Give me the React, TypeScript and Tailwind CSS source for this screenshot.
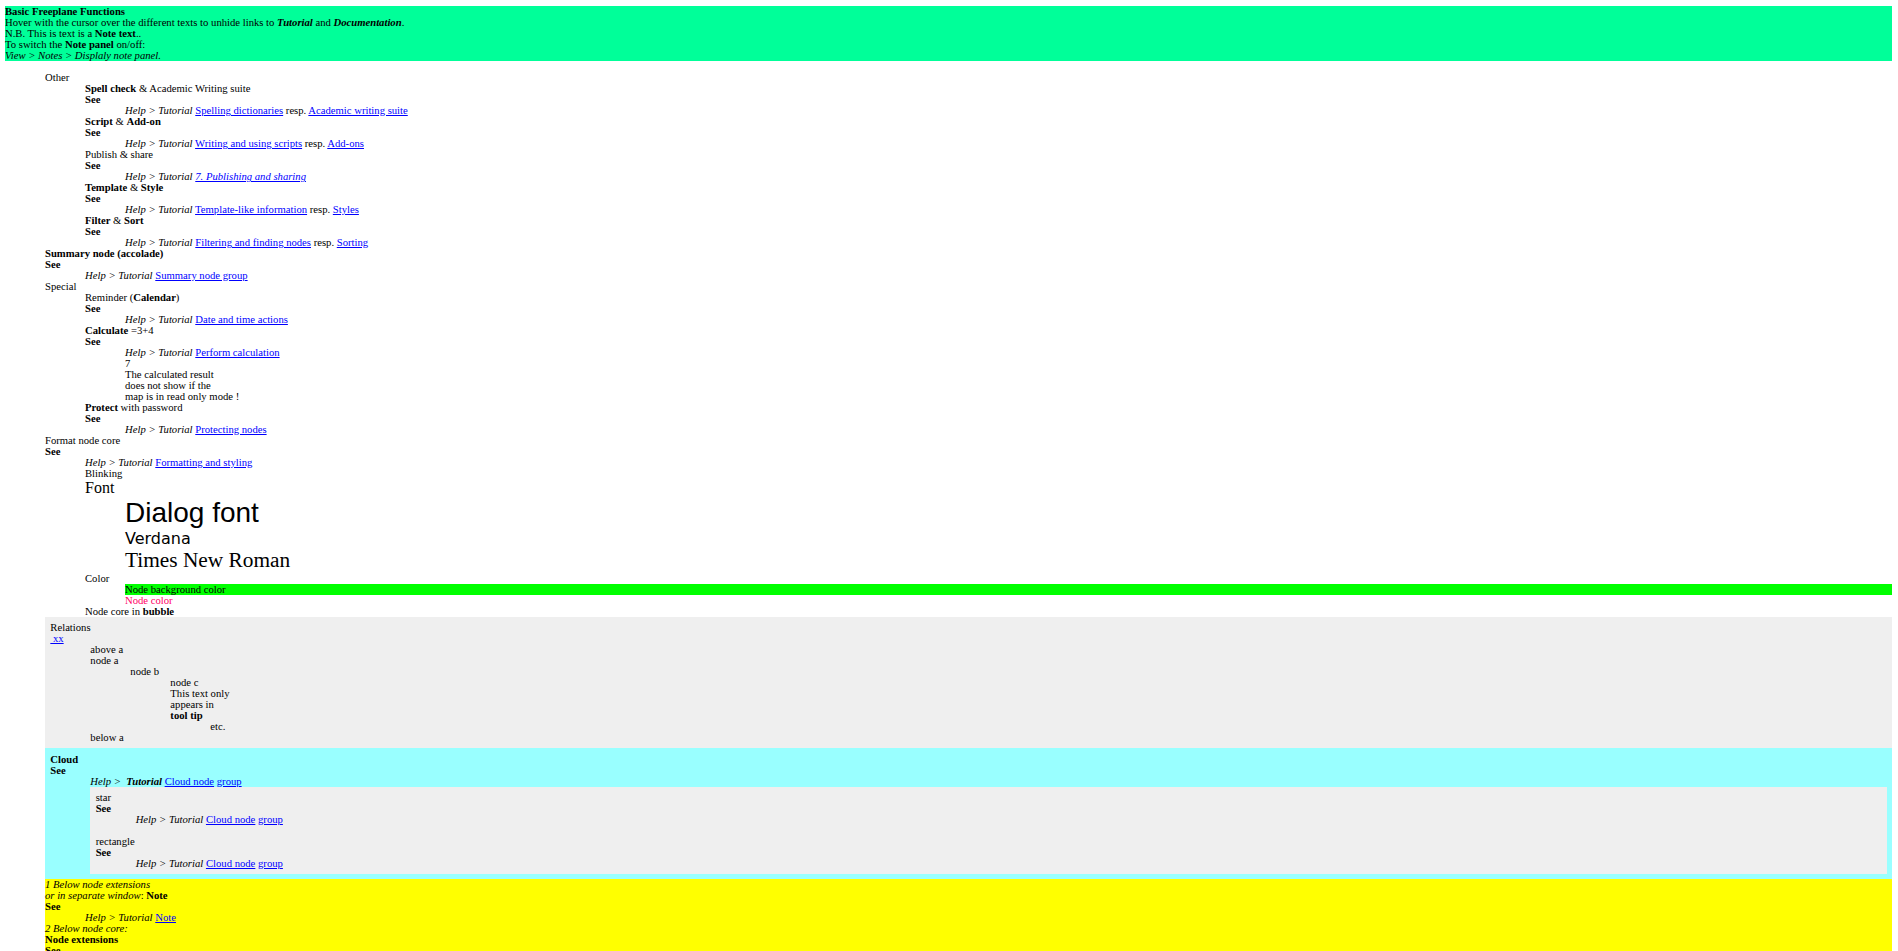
const link = 'text-[#0000ff] underline'

function Help({ children }: { children: React.ReactNode }) {
  return (
    <div className="pl-10">
      <i>Help &gt; Tutorial</i> {children}
    </div>
  )
}

function See({ children }: { children: React.ReactNode }) {
  return (
    <>
      <div className="font-bold">See</div>
      {children}
    </>
  )
}

function A({ children, italic = false }: { children: React.ReactNode; italic?: boolean }) {
  return <a href="#" className={italic ? `${link} italic` : link}>{children}</a>
}

function Section({ title, children }: { title: React.ReactNode; children: React.ReactNode }) {
  return (
    <>
      <div>{title}</div>
      <See>
        <Help>{children}</Help>
      </See>
    </>
  )
}

export default function App() {
  return (
    <div className="h-[951px] overflow-hidden bg-white pl-[5px] pr-[6px] pt-[6px] font-['Liberation_Serif',serif] text-[10.67px] leading-[11px] text-black">
      {/* Note text */}
      <div className="bg-[#00ff99]">
        <div className="font-bold">Basic Freeplane Functions</div>
        <div>
          Hover with the cursor over the different texts to unhide links to <b><i>Tutorial</i></b> and <b><i>Documentation</i></b>.
        </div>
        <div>N.B. This is text is a <b>Note text</b>..</div>
        <div>To switch the <b>Note panel</b> on/off:</div>
        <div><i>View &gt; Notes &gt; Displaly note panel.</i></div>
      </div>

      <div className="mt-[11px] pl-10">
        <div>Other</div>
        <div className="pl-10">
          <Section title={<><b>Spell check</b> &amp; Academic Writing suite</>}>
            <A>Spelling dictionaries</A> resp. <A>Academic writing suite</A>
          </Section>
          <Section title={<><b>Script</b> &amp; <b>Add-on</b></>}>
            <A>Writing and using scripts</A> resp. <A>Add-ons</A>
          </Section>
          <Section title="Publish &amp; share">
            <A italic>7. Publishing and sharing</A>
          </Section>
          <Section title={<><b>Template</b> &amp; <b>Style</b></>}>
            <A>Template-like information</A> resp. <A>Styles</A>
          </Section>
          <Section title={<><b>Filter</b> &amp; <b>Sort</b></>}>
            <A>Filtering and finding nodes</A> resp. <A>Sorting</A>
          </Section>
        </div>

        <Section title={<b>Summary node (accolade)</b>}>
          <A>Summary node group</A>
        </Section>

        <div>Special</div>
        <div className="pl-10">
          <Section title={<>Reminder (<b>Calendar</b>)</>}>
            <A>Date and time actions</A>
          </Section>
          <Section title={<><b>Calculate</b> =3+4</>}>
            <A>Perform calculation</A>
          </Section>
          <div className="pl-10">
            <div>7</div>
            <div>The calculated result</div>
            <div>does not show if the</div>
            <div>map is in read only mode !</div>
          </div>
          <Section title={<><b>Protect</b> with password</>}>
            <A>Protecting nodes</A>
          </Section>
        </div>

        <Section title="Format node core">
          <A>Formatting and styling</A>
        </Section>
        <div className="pl-10">
          <div>Blinking</div>
          <div className="text-[16px] leading-[18px]">Font</div>
          <div className="pl-10">
            <div className="font-['Liberation_Sans',sans-serif] text-[28px] leading-[32px]">Dialog font</div>
            <div className="font-['DejaVu_Sans',sans-serif] text-[16px] leading-[19px]">Verdana</div>
            <div className="text-[21.33px] leading-[25px]">Times New Roman</div>
          </div>
          <div>Color</div>
          <div className="pl-10">
            <div className="bg-[#00ff00]">Node background color</div>
            <div className="text-[#ff0066]">Node color</div>
          </div>
          <div>Node core in <b>bubble</b></div>
        </div>

        {/* Clouds */}
        <div className="bg-[#efefef] px-[5.33px] py-[5px]">
          <div>Relations</div>
          <a href="#" className={link}>&nbsp;xx</a>
          <div className="pl-10">
            <div>above a</div>
            <div>node a</div>
            <div className="pl-10">
              <div>node b</div>
              <div className="pl-10">
                <div>node c</div>
                <div>This text only</div>
                <div>appears in</div>
                <div className="font-bold">tool tip</div>
                <div className="pl-10">etc.</div>
              </div>
            </div>
            <div>below a</div>
          </div>
        </div>

        <div className="bg-[#99ffff] px-[5.33px] pb-[5px] pt-[6px]">
          <div className="font-bold">Cloud</div>
          <See>
            <div className="pl-10">
              <i>Help &gt;&nbsp; <b>Tutorial</b></i> <A>Cloud node</A> <A>group</A>
            </div>
          </See>
          <div className="ml-10 bg-[#efefef] px-[5.33px] py-[5px]">
            <div>star</div>
            <See>
              <div className="pl-10">
                <i>Help &gt; Tutorial</i> <A>Cloud node</A> <A>group</A>
              </div>
            </See>
            <div className="h-[11px]" />
            <div>rectangle</div>
            <See>
              <div className="pl-10">
                <i>Help &gt; Tutorial</i> <A>Cloud node</A> <A>group</A>
              </div>
            </See>
          </div>
        </div>

        <div className="bg-[#ffff00]">
          <div><i>1 Below node extensions</i></div>
          <div><i>or in separate window</i>: <b>Note</b></div>
          <See>
            <Help><A>Note</A></Help>
          </See>
          <div><i>2 Below node core:</i></div>
          <div className="font-bold">Node extensions</div>
          <div className="font-bold">See</div>
        </div>
      </div>
    </div>
  )
}
